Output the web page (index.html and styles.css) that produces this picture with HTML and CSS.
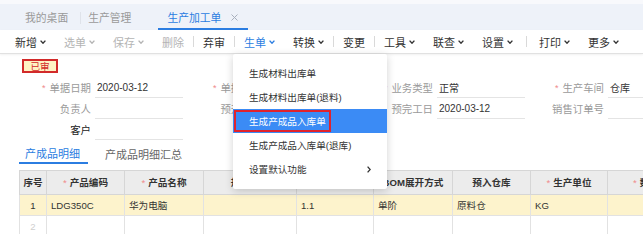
FILE: index.html
```html
<!DOCTYPE html>
<html lang="zh">
<head>
<meta charset="utf-8">
<title>生产加工单</title>
<link rel="stylesheet" href="styles.css">
</head>
<body>
<div class="page">
  <div class="tabbar">
    <div class="tab">我的桌面</div>
    <span class="tab-sep"></span>
    <div class="tab">生产管理</div>
    <div class="tab active">生产加工单<svg class="close" width="7" height="7" viewBox="0 0 7 7"><path d="M0.5 0.5L6.5 6.5M6.5 0.5L0.5 6.5" stroke="#a8b0bd" stroke-width="1"/></svg></div>
  </div>

  <div class="toolbar">
    <div class="tb">新增<svg class="chev" width="6" height="4" viewBox="0 0 6 4"><path d="M0.6 0.6L3 3.2L5.4 0.6" fill="none" stroke="currentColor" stroke-width="1.4"/></svg></div>
    <div class="tb disabled">选单<svg class="chev" width="6" height="4" viewBox="0 0 6 4"><path d="M0.6 0.6L3 3.2L5.4 0.6" fill="none" stroke="currentColor" stroke-width="1.4"/></svg></div>
    <div class="tb disabled">保存<svg class="chev" width="6" height="4" viewBox="0 0 6 4"><path d="M0.6 0.6L3 3.2L5.4 0.6" fill="none" stroke="currentColor" stroke-width="1.4"/></svg></div>
    <div class="tb disabled">删除</div>
    <span class="tb-sep"></span>
    <div class="tb">弃审</div>
    <span class="tb-sep"></span>
    <div class="tb primary">生单<svg class="chev" width="6" height="4" viewBox="0 0 6 4"><path d="M0.6 0.6L3 3.2L5.4 0.6" fill="none" stroke="currentColor" stroke-width="1.4"/></svg></div>
    <div class="tb">转换<svg class="chev" width="6" height="4" viewBox="0 0 6 4"><path d="M0.6 0.6L3 3.2L5.4 0.6" fill="none" stroke="currentColor" stroke-width="1.4"/></svg></div>
    <span class="tb-sep"></span>
    <div class="tb">变更</div>
    <span class="tb-sep"></span>
    <div class="tb">工具<svg class="chev" width="6" height="4" viewBox="0 0 6 4"><path d="M0.6 0.6L3 3.2L5.4 0.6" fill="none" stroke="currentColor" stroke-width="1.4"/></svg></div>
    <div class="tb">联查<svg class="chev" width="6" height="4" viewBox="0 0 6 4"><path d="M0.6 0.6L3 3.2L5.4 0.6" fill="none" stroke="currentColor" stroke-width="1.4"/></svg></div>
    <div class="tb">设置<svg class="chev" width="6" height="4" viewBox="0 0 6 4"><path d="M0.6 0.6L3 3.2L5.4 0.6" fill="none" stroke="currentColor" stroke-width="1.4"/></svg></div>
    <span class="tb-sep wide"></span>
    <div class="tb">打印<svg class="chev" width="6" height="4" viewBox="0 0 6 4"><path d="M0.6 0.6L3 3.2L5.4 0.6" fill="none" stroke="currentColor" stroke-width="1.4"/></svg></div>
    <div class="tb">更多<svg class="chev" width="6" height="4" viewBox="0 0 6 4"><path d="M0.6 0.6L3 3.2L5.4 0.6" fill="none" stroke="currentColor" stroke-width="1.4"/></svg></div>
  </div>

  <div class="status"><span class="badge">已审</span></div>

  <div class="form">
    <div class="row">
      <div class="field"><span class="label req">单据日期</span><span class="value">2020-03-12</span></div>
      <div class="field"><span class="label req">单据编号</span><span class="value"></span></div>
      <div class="field"><span class="label req">业务类型</span><span class="value">正常</span></div>
      <div class="field"><span class="label req">生产车间</span><span class="value">仓库</span></div>
    </div>
    <div class="row">
      <div class="field"><span class="label">负责人</span><span class="value"></span></div>
      <div class="field"><span class="label">预开工日</span><span class="value"></span></div>
      <div class="field"><span class="label">预完工日</span><span class="value">2020-03-12</span></div>
      <div class="field"><span class="label">销售订单号</span><span class="value"></span></div>
    </div>
    <div class="row">
      <div class="field"><span class="label dark">客户</span><span class="value"></span></div>
    </div>
  </div>

  <div class="subtabs">
    <div class="subtab active">产成品明细</div>
    <div class="subtab">产成品明细汇总</div>
  </div>

  <table class="grid">
    <colgroup>
      <col class="c-no"><col class="c-78"><col class="c-79"><col class="c-93"><col class="c-77"><col class="c-79"><col class="c-78"><col class="c-77"><col class="c-77">
    </colgroup>
    <thead>
      <tr>
        <th>序号</th>
        <th><span class="star">*</span>产品编码</th>
        <th><span class="star">*</span>产品名称</th>
        <th>规格型号</th>
        <th>生产数量</th>
        <th>BOM展开方式</th>
        <th>预入仓库</th>
        <th><span class="star">*</span>生产单位</th>
        <th><span class="star">*</span>数量</th>
      </tr>
    </thead>
    <tbody>
      <tr class="sel">
        <td class="no">1</td><td>LDG350C</td><td>华为电脑</td><td></td><td>1.1</td><td>单阶</td><td>原料仓</td><td>KG</td><td></td>
      </tr>
      <tr>
        <td class="no muted">2</td><td></td><td></td><td></td><td></td><td></td><td></td><td></td><td></td>
      </tr>
    </tbody>
  </table>

  <div class="menu">
    <div class="mi">生成材料出库单</div>
    <div class="mi">生成材料出库单(退料)</div>
    <div class="mi hl"><span class="mark">生成产成品入库单</span></div>
    <div class="mi">生成产成品入库单(退库)</div>
    <div class="mi">设置默认功能<svg width="4" height="7" viewBox="0 0 4 7"><path d="M0.6 0.6L3.2 3.5L0.6 6.4" fill="none" stroke="#333" stroke-width="1.3"/></svg></div>
  </div>
</div>
</body>
</html>
```

FILE: styles.css
```css
html, body {
  margin: 0;
  padding: 0;
}
body {
  width: 643px;
  height: 234px;
  overflow: hidden;
  background: #fff;
  color: #333;
  font-family: "Liberation Sans", "Noto Sans CJK SC", sans-serif;
}
.page {
  position: relative;
  width: 643px;
  height: 234px;
  overflow: hidden;
}

/* top tabs */
.tabbar {
  display: flex;
  align-items: stretch;
  height: 30px;
  box-sizing: border-box;
  border-top: 4px solid #f8f9fc;
  background: #eef2f9;
  padding-left: 25px;
  font-size: 10.8px;
  color: #9a9a9a;
}
.tab {
  display: flex;
  align-items: center;
}
.tab-sep {
  width: 1px;
  background: #dfe3ea;
  margin: 8px 7px 6px 12px;
}
.tab.active {
  margin-left: 27px;
  padding: 2px 10px 0 9px;
  gap: 10px;
  color: #2b7de1;
  border-bottom: 2px solid #2b7de1;
}
.close {
  display: block;
}

/* toolbar */
.toolbar {
  display: flex;
  align-items: center;
  height: 23px;
  border-bottom: 1px solid #e1e1e1;
  box-shadow: 0 1px 2px rgba(0, 0, 0, 0.06);
  padding-left: 6px;
  font-size: 11px;
  color: #333;
}
.tb {
  display: flex;
  align-items: center;
  gap: 3px;
  padding: 0 9px;
}
.tb.disabled {
  color: #b4b4b4;
}
.tb.primary {
  color: #2b7de1;
}
.chev {
  display: block;
}
.tb-sep {
  width: 1px;
  height: 11px;
  background: #d9d9d9;
}
.tb-sep.wide {
  margin: 0 3px 0 4px;
}

/* status badge */
.status {
  padding: 5px 0 0 22px;
  height: 14px;
}
.badge {
  display: flex;
  align-items: center;
  justify-content: center;
  width: 36px;
  height: 14px;
  box-sizing: border-box;
  border: 2px solid #d22a2a;
  background: #fff3c4;
  color: #d22a2a;
  font-size: 9.6px;
}

/* form */
.form {
  margin-top: 4px;
  padding-left: 13px;
  font-size: 10.4px;
}
.row {
  display: flex;
  height: 21px;
}
.field {
  display: flex;
  width: 171px;
  flex: none;
}
.label {
  width: 78px;
  display: flex;
  align-items: center;
  justify-content: flex-end;
  color: #9a9a9a;
}
.label.dark {
  color: #222;
}
.req::before {
  content: "*";
  color: #f08a8a;
  margin-right: 4px;
  font-size: 9px;
}
.value {
  width: 88px;
  margin-left: 4px;
  box-sizing: border-box;
  border-bottom: 1px solid #e4e4e4;
  display: flex;
  align-items: center;
  padding-left: 2px;
  font-size: 10px;
  color: #333;
}

/* sub tabs */
.subtabs {
  display: flex;
  height: 24px;
  margin-left: 19px;
  font-size: 11px;
}
.subtab {
  display: flex;
  align-items: center;
  box-sizing: border-box;
  padding: 3px 6px 0;
  color: #666;
}
.subtab.active {
  padding: 3px 8px 0 6px;
  color: #2b7de1;
  border-bottom: 2px solid #2b7de1;
}
.subtab + .subtab {
  margin-left: 11px;
}

/* grid */
.grid {
  margin: 6px 0 0 19px;
  border-collapse: collapse;
  table-layout: fixed;
  width: 665px;
  font-size: 9.6px;
}
.c-no { width: 27px; }
.c-78 { width: 78px; }
.c-79 { width: 79px; }
.c-93 { width: 93px; }
.c-77 { width: 77px; }
.grid th {
  height: 21px;
  padding: 0 0 2px;
  background: #ececec;
  border: 1px solid #d6d6d6;
  font-weight: bold;
  color: #333;
  text-align: center;
  white-space: nowrap;
  overflow: hidden;
}
.grid td {
  height: 20px;
  padding: 0 4px;
  border: 1px solid #e2e2e2;
  white-space: nowrap;
  overflow: hidden;
  color: #333;
}
.grid .star {
  color: #f08a8a;
  font-weight: normal;
  margin-right: 3px;
}
.grid tr.sel td {
  background: #fdf3cc;
}
.grid td.no {
  text-align: center;
  padding: 0;
}
.grid td.muted {
  color: #cfcfcf;
}

/* dropdown menu */
.menu {
  position: absolute;
  left: 233px;
  top: 54px;
  width: 154px;
  padding: 7px 0 8px;
  background: #fff;
  border-radius: 2px;
  box-shadow: 0 2px 8px rgba(0, 0, 0, 0.18);
  font-size: 9.6px;
  color: #333;
}
.mi {
  height: 24px;
  display: flex;
  align-items: center;
  justify-content: space-between;
  padding: 0 16px;
}
.mi.hl {
  background: #3b8bf5;
  color: #fff;
  padding-left: 1px;
}
.mark {
  display: flex;
  align-items: center;
  height: 22px;
  box-sizing: border-box;
  border: 2px solid #e0232d;
  padding: 0 3px 0 13px;
}
```
